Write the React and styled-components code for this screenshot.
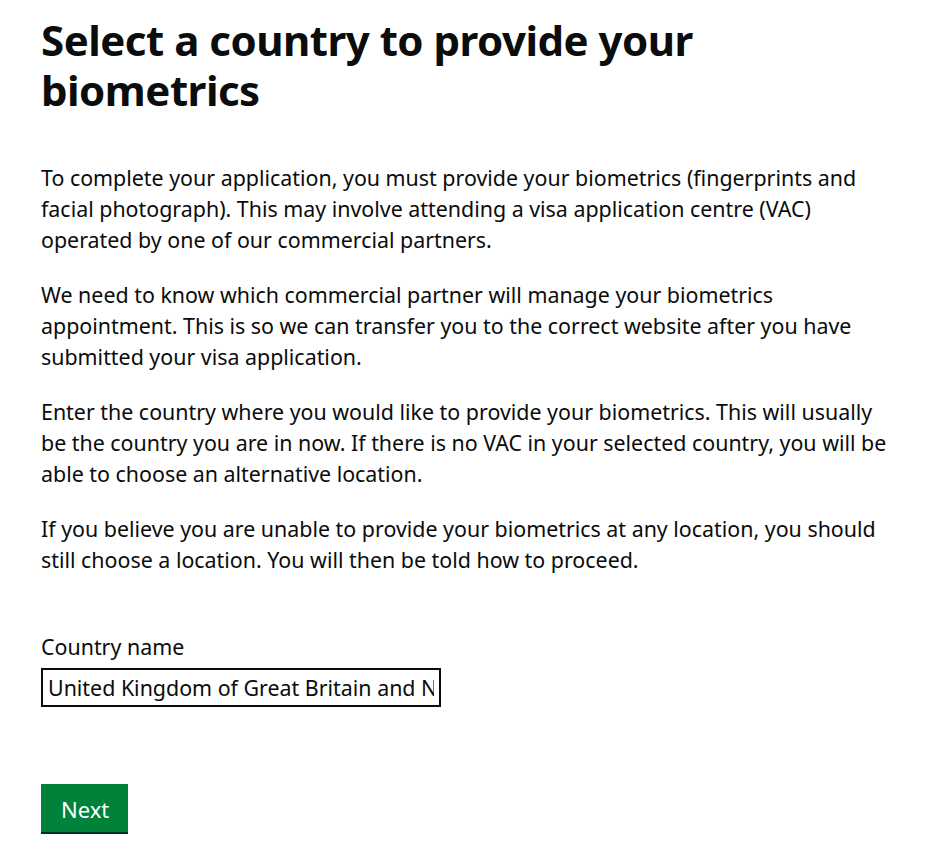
import React from "react";
import styled, { createGlobalStyle } from "styled-components";

const Global = createGlobalStyle`
  html, body { margin: 0; padding: 0; background: #ffffff; }
  body { font-family: "Noto Sans", Arial, sans-serif; color: #0b0c0c; }
  * { box-sizing: border-box; }
`;

const Main = styled.main`
  padding: 15px 41px 20px 41px;
`;

const Heading = styled.h1`
  margin: 0 0 47px 0;
  font-size: 42px;
  line-height: 50px;
  font-weight: 700;
  letter-spacing: -0.5px;
  max-width: 680px;
`;

const Para = styled.p`
  margin: 0 0 24px 0;
  font-size: 21.4px;
  line-height: 31px;
  max-width: 850px;
`;

const Field = styled.div`
  margin-top: 56px;
  display: flex;
  flex-direction: column;
  gap: 6px;
`;

const Label = styled.label`
  font-size: 21.4px;
  line-height: 31px;
`;

const Input = styled.input`
  width: 400px;
  height: 39px;
  border: 2px solid #0b0c0c;
  border-radius: 0;
  padding: 2px 5px;
  font-family: inherit;
  font-size: 21.4px;
  color: #0b0c0c;
  outline: none;
`;

const Button = styled.button`
  margin-top: 77px;
  background: #00823b;
  color: #ffffff;
  border: 0;
  border-radius: 0;
  box-shadow: 0 2px 0 #003418;
  font-family: inherit;
  font-size: 22px;
  line-height: 24px;
  padding: 13px 19px 11px 20px;
  cursor: pointer;
`;

export default function App() {
  return (
    <>
      <Global />
      <Main>
        <Heading>Select a country to provide your biometrics</Heading>
        <Para>
          To complete your application, you must provide your biometrics (fingerprints and
          facial photograph). This may involve attending a visa application centre (VAC)
          operated by one of our commercial partners.
        </Para>
        <Para>
          We need to know which commercial partner will manage your biometrics appointment.
          This is so we can transfer you to the correct website after you have submitted your
          visa application.
        </Para>
        <Para>
          Enter the country where you would like to provide your biometrics. This will usually
          be the country you are in now. If there is no VAC in your selected country, you will
          be able to choose an alternative location.
        </Para>
        <Para>
          If you believe you are unable to provide your biometrics at any location, you should
          still choose a location. You will then be told how to proceed.
        </Para>
        <Field>
          <Label htmlFor="country">Country name</Label>
          <Input id="country" defaultValue="United Kingdom of Great Britain and Northern Ireland" />
        </Field>
        <div>
          <Button type="button">Next</Button>
        </div>
      </Main>
    </>
  );
}
